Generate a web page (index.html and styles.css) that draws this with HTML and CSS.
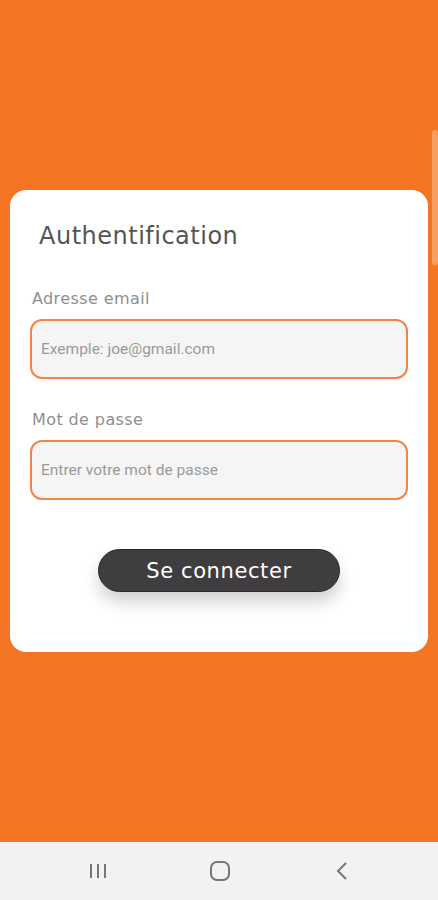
FILE: index.html
```html
<!DOCTYPE html>
<html lang="fr">
<head>
    <meta charset="UTF-8">
    <meta name="viewport" content="width=device-width, initial-scale=1.0">
    <title>Authentification</title>
    <link rel="stylesheet" href="styles.css">
</head>
<body>
    <div class="screen">
        <div class="scrollbar"></div>
        <div class="card">
            <h1>Authentification</h1>
            <form class="form">
                <label for="email">Adresse email</label>
                <input type="text" id="email" placeholder="Exemple: joe@gmail.com">

                <label for="password">Mot de passe</label>
                <input type="password" id="password" placeholder="Entrer votre mot de passe">

                <div class="actions">
                    <button type="button">Se connecter</button>
                </div>
            </form>
        </div>
    </div>

    <!-- barre de navigation -->
    <div class="navbar">
        <span class="nav-item">
            <svg width="20" height="16" viewBox="0 0 20 16">
                <path d="M3 1v14M10 1v14M17 1v14" stroke="#777" stroke-width="2" fill="none"/>
            </svg>
        </span>
        <span class="nav-item">
            <svg width="22" height="22" viewBox="0 0 22 22">
                <rect x="2" y="2" width="18" height="18" rx="6" stroke="#777" stroke-width="2" fill="none"/>
            </svg>
        </span>
        <span class="nav-item">
            <svg width="14" height="20" viewBox="0 0 14 20">
                <path d="M11 2L3 10l8 8" stroke="#777" stroke-width="2" fill="none"/>
            </svg>
        </span>
    </div>
</body>
</html>
```

FILE: styles.css
```css
body {
    margin: 0;
    padding: 0;
    background-color: #f47523;
    font-family: "DejaVu Sans", sans-serif;
}
.screen {
    height: 842px;
    padding: 190px 10px 0;
    box-sizing: border-box;
    position: relative;
}
.scrollbar {
    position: absolute;
    top: 130px;
    right: 0;
    width: 6px;
    height: 135px;
    background: rgba(255, 255, 255, 0.3);
    border-radius: 3px;
}
.card {
    background: #fff;
    border-radius: 16px;
    height: 462px;
    padding: 32px 20px 0 20px;
    box-sizing: border-box;
}
h1 {
    margin: 0 0 0 9px;
    font-size: 24px;
    font-weight: normal;
    color: #555;
    letter-spacing: 0.5px;
}
.form {
    margin-top: 39px;
}
label {
    display: block;
    margin: 0 0 11px 2px;
    font-size: 16px;
    color: #8f8f8f;
    letter-spacing: 0.4px;
}
input {
    display: block;
    width: 378px;
    height: 60px;
    margin-bottom: 31px;
    padding: 0 9px;
    border: 2px solid #f2834a;
    border-radius: 12px;
    background: #f5f5f5;
    box-sizing: border-box;
    font-family: Roboto, sans-serif;
    font-size: 15.5px;
}
input::placeholder {
    color: #9a9a9a;
}
.actions {
    display: flex;
    justify-content: center;
    padding-top: 18px;
}
button {
    width: 242px;
    height: 43px;
    border: 1px solid #2a282a;
    border-radius: 22px;
    background-color: #403d40;
    color: #fff;
    font-family: "DejaVu Sans", sans-serif;
    font-size: 21px;
    letter-spacing: 0.6px;
    box-shadow: 0 10px 16px rgba(0, 0, 0, 0.18);
}
.navbar {
    height: 58px;
    background: #f2f2f2;
    display: flex;
    justify-content: center;
    align-items: center;
    padding-left: 2px;
}
.nav-item {
    width: 122px;
    display: flex;
    justify-content: center;
}
```
